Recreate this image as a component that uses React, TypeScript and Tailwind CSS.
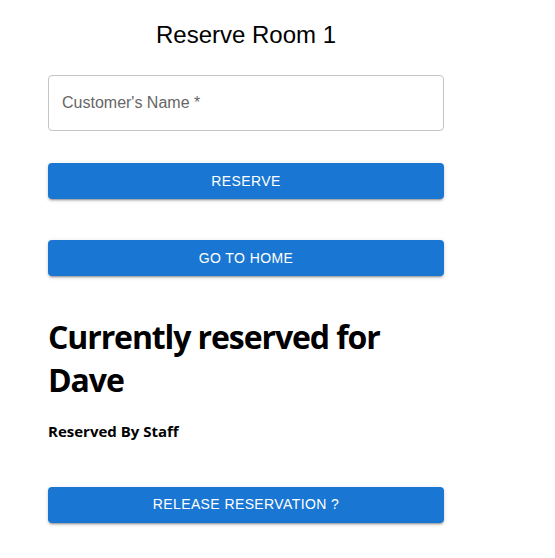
const btn =
  "block w-full h-9 rounded bg-[#1976d2] text-white text-[14px] tracking-[0.4px] uppercase shadow-[0_3px_1px_-2px_rgba(0,0,0,0.2),0_2px_2px_0_rgba(0,0,0,0.14),0_1px_5px_0_rgba(0,0,0,0.12)]";

export default function App() {
  return (
    <div className="w-[555px] h-[558px] bg-white font-['Liberation_Sans',Arial,sans-serif]">
      <div className="ml-[48px] w-[396px] pt-[21px]">
        <h2 className="text-center text-[24px] leading-[28px] text-black">Reserve Room 1</h2>

        <div className="mt-[26px] h-[56px] rounded border border-[#c4c4c4] flex items-center px-[13px]">
          <span className="text-[16px] text-[#666]">Customer's Name *</span>
        </div>

        <button className={`${btn} mt-[32px]`}>Reserve</button>
        <button className={`${btn} mt-[41px]`}>Go to Home</button>

        <h1 className="mt-[39px] text-[32px] leading-[43px] font-bold text-black font-['Open_Sans','Noto_Sans',sans-serif] tracking-[-1.1px]">
          Currently reserved for Dave
        </h1>
        <h4 className="mt-[19px] text-[15px] font-bold text-black font-['Open_Sans','Noto_Sans',sans-serif]">
          Reserved By Staff
        </h4>

        <button className={`${btn} mt-[44px]`}>Release Reservation ?</button>
      </div>
    </div>
  );
}
